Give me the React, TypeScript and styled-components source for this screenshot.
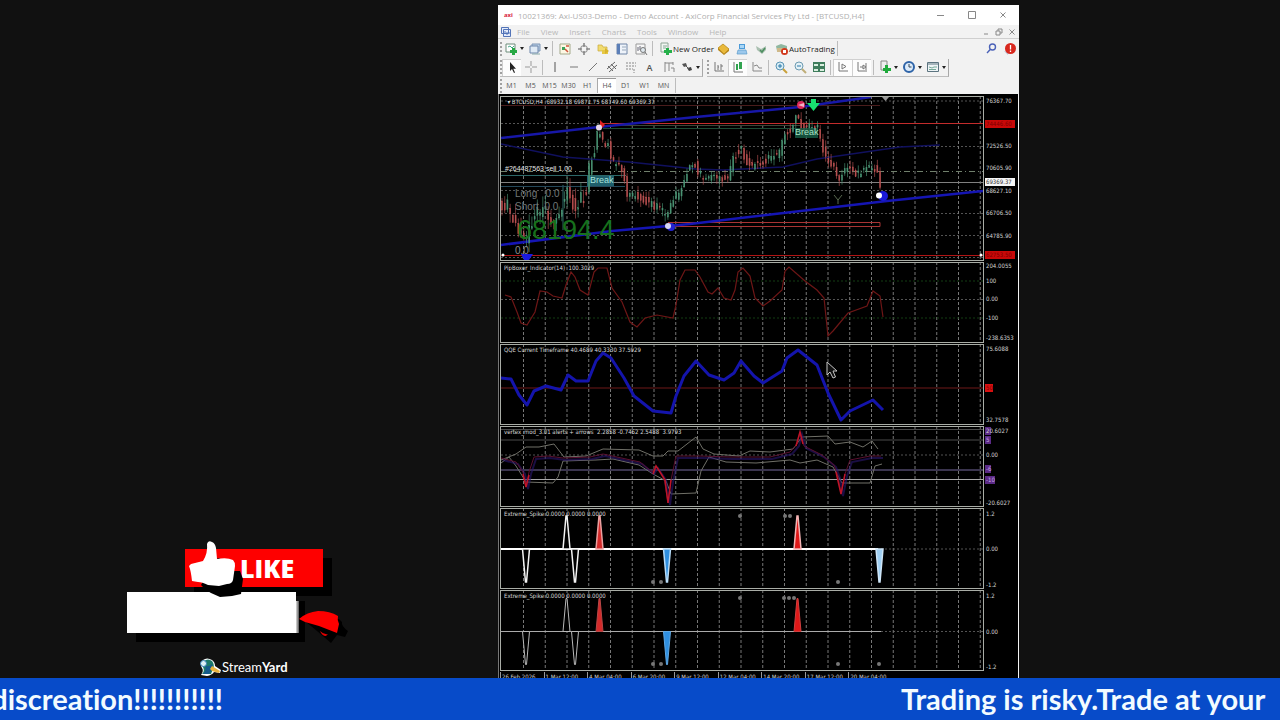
import React from "react";
import styled, { createGlobalStyle, css } from "styled-components";

const GlobalStyle = createGlobalStyle`
  * { box-sizing: border-box; }
  body { margin: 0; background: #111111; font-family: "Open Sans", "Liberation Sans", sans-serif; }
  button { font: inherit; color: inherit; border: 0; padding: 0; background: none; }
`;

/* ---------- page ---------- */
const Page = styled.div`
  display: flex;
  flex-direction: column;
  min-height: 100vh;
  background: #111111;
  overflow: hidden;
`;
const Stage = styled.main`
  flex: 1;
  display: grid;
  grid-template-columns: minmax(0, 498fr) minmax(0, 521fr) minmax(0, 261fr);
`;

/* ---------- stream overlay on the left ---------- */
const Overlay = styled.aside`
  display: flex;
  flex-direction: column;
  justify-content: flex-end;
  align-items: flex-start;
  padding-left: 127px;
`;
const LikeButton = styled.button`
  position: relative;
  width: 138px;
  height: 38px;
  margin-left: 58px;
  padding-left: 55px;
  display: flex;
  align-items: center;
  background: #fe0000;
  box-shadow: 9px 9px 0 #000;
  color: #fff;
  font-size: 25px;
  font-weight: 800;
  line-height: 36px;
`;
const Thumb = styled.svg`
  position: absolute;
  z-index: 1;
  left: 0;
  top: -10px;
  width: 64px;
  height: 60px;
`;
const CardRow = styled.div`
  display: flex;
  align-items: flex-start;
  margin-top: 5px;
`;
const Card = styled.div`
  position: relative;
  width: 169px;
  height: 41px;
  background: #fff;
  box-shadow: 9px 9px 0 #000;
`;
const CardEdge = styled.div`
  width: 3px;
  height: 32px;
  margin-top: 9px;
  position: relative;
  background: linear-gradient(90deg, #ddd, #555);
`;
const Cap = styled.svg`
  position: relative;
  width: 52px;
  height: 40px;
  margin-top: 15px;
`;
const Brand = styled.div`
  display: flex;
  align-items: center;
  margin: 10px 0 1px 72px;
  color: #fff;
  font-family: Lato, sans-serif;
  font-size: 13px;
  line-height: 18px;
`;
const BrandMark = styled.svg`
  width: 23px;
  height: 20px;
`;

/* ---------- terminal window ---------- */
const Terminal = styled.section`
  margin-top: 5px;
  display: flex;
  flex-direction: column;
  background: #f2f2f2;
  min-width: 0;
`;
const TitleBar = styled.header`
  display: flex;
  align-items: center;
  height: 20px;
  padding: 0 12px 0 6px;
  background: #fff;
  color: #b0b0b0;
`;
const AppMark = styled.span`
  width: 14px;
  color: #d8203c;
  font-size: 6px;
  font-weight: 700;
`;
const Title = styled.h1`
  flex: 1;
  margin: 0;
  font-size: 8px;
  font-weight: 400;
  white-space: nowrap;
`;
const WindowButtons = styled.div<{ $gap: number }>`
  display: flex;
  gap: ${(p) => p.$gap}px;
  color: #888;
`;
const GlyphButton = styled.button`
  display: flex;
  width: 8px;
  height: 8px;
`;
const MenuBar = styled.nav`
  display: flex;
  align-items: center;
  height: 14px;
  padding: 0 3px 0 2px;
  border-bottom: 1px solid #cfcfcf;
  color: #b8b8b8;
  font-size: 8px;
`;
const MenuItems = styled.div`
  flex: 1;
  display: flex;
  gap: 11px;
  margin-left: 5px;
`;
const Bar = styled.div<{ $h: number }>`
  display: flex;
  align-items: center;
  height: ${(p) => p.$h}px;
  padding-left: 2px;
`;
const Group = styled.div`
  display: flex;
  align-items: center;
  height: 18px;
  margin-right: 4px;
  border-right: 1px solid #a8a8a8;
  border-bottom: 1px solid #bdbdbd;
`;
const Grip = styled.span`
  width: 2px;
  height: 14px;
  border-left: 2px dotted #a0a0a0;
`;
const Sep = styled.span`
  width: 1px;
  height: 15px;
  margin: 0 2px;
  background: #bcbcbc;
`;
const Tool = styled.button<{ $w?: number; $on?: boolean }>`
  flex: none;
  display: flex;
  align-items: center;
  justify-content: center;
  gap: 2px;
  width: ${(p) => p.$w ?? 19}px;
  height: 17px;
  color: #555;
  ${(p) => p.$on && css`background: #fdfdfd; box-shadow: inset 1px 1px 0 #d0d0d0;`}
`;
const Letter = styled.span`
  font-size: 9px;
  font-weight: 600;
`;
const LabelTool = styled.button`
  display: flex;
  align-items: center;
  height: 17px;
  padding-left: 4px;
  color: #1c1c1c;
  font-size: 8px;
  white-space: nowrap;
`;
const Caret = styled.span`
  border: 2px solid transparent;
  border-top: 3px solid #222;
  border-bottom: 0;
`;
const Spacer = styled.span`
  flex: 1;
`;
const Glyph = styled.svg`
  flex: none;
  width: 14px;
  height: 14px;
`;
const FrameButton = styled.button<{ $on?: boolean }>`
  width: 19px;
  height: 15px;
  color: #555;
  font-size: 7px;
  line-height: 14px;
  ${(p) => p.$on && css`background: #fff; border-top: 1px solid #999; border-left: 1px solid #aaa;`}
`;

/* ---------- charts ---------- */
const Charts = styled.div`
  display: flex;
  flex-direction: column;
  gap: 1px;
  padding: 2px 0 0 1px;
  background: #000;
  border-left: 1px solid #777;
  border-right: 1px solid #f4f4f4;
`;
const Panel = styled.section<{ $h: number }>`
  display: flex;
  height: ${(p) => p.$h}px;
`;
const Plot = styled.div`
  position: relative;
  flex: 1;
  min-width: 0;
  border: 1px solid #a9ada6;
`;
const Drawing = styled.svg`
  display: block;
  width: 100%;
  height: 100%;
`;
const PlotTitle = styled.h2`
  position: absolute;
  left: 3px;
  top: 0;
  margin: 0;
  color: #d8d8d8;
  font-family: "DejaVu Sans Condensed", "DejaVu Sans", sans-serif;
  font-size: 6px;
  font-weight: 400;
  line-height: 9px;
  white-space: pre;
`;
const Note = styled.span<{ $x: number; $y: number; $size: number; $color: string }>`
  position: absolute;
  left: ${(p) => p.$x}px;
  top: ${(p) => p.$y}px;
  color: ${(p) => p.$color};
  font-family: "Liberation Sans", sans-serif;
  font-size: ${(p) => p.$size}px;
  line-height: 1;
  white-space: pre;
`;
const Scale = styled.div`
  position: relative;
  flex: none;
  width: 34px;
  overflow: hidden;
  color: #d4d4d4;
  font-family: "DejaVu Sans Condensed", "DejaVu Sans", sans-serif;
  font-size: 6px;
  line-height: 8px;
`;
const tones = {
  plain: css``,
  red: css`background: #c80808; color: #7c0000; width: 30px;`,
  white: css`background: #f4f4f4; color: #333; width: 30px;`,
  dot: css`background: #d81010; color: #7c0000; width: 8px;`,
  purple: css`background: #5b2a86; color: #c8a8e0; min-width: 6px;`,
};
type Tone = keyof typeof tones;
const Mark = styled.span<{ $y: number; $tone: Tone }>`
  position: absolute;
  left: 1px;
  top: ${(p) => p.$y - 4}px;
  height: 8px;
  padding-left: 1px;
  ${(p) => tones[p.$tone]}
`;
const TimeAxis = styled.div`
  display: flex;
  height: 6px;
  margin-right: 34px;
  overflow: hidden;
  color: #d4d4d4;
  font-family: "DejaVu Sans Condensed", "DejaVu Sans", sans-serif;
  font-size: 6px;
  line-height: 9px;
`;
const TimeLabel = styled.time`
  flex: 0 0 9%;
  padding-left: 1px;
  border-left: 1px solid #999;
  white-space: nowrap;
`;

/* ---------- ticker ---------- */
const Ticker = styled.footer`
  display: grid;
  grid-template-columns: minmax(0, 223fr) minmax(0, 678fr) minmax(0, 379fr);
  align-items: center;
  height: 42px;
  overflow: hidden;
  background: #074bc9;
  color: #f2fbff;
  font-family: Lato, "Open Sans", sans-serif;
  font-size: 29px;
  font-weight: 700;
  font-variant-ligatures: none;
  line-height: 42px;
  white-space: nowrap;
`;
const TickerTail = styled.span`
  justify-self: end;
`;
const TickerHead = styled.span`
  grid-column: 3;
`;

/* ---------- toolbar icons ---------- */
const icons: Record<string, React.ReactNode> = {
  newChart: <><path d="M2 2h9v8H2z" fill="#fff" stroke="#6d8d7a" /><path d="M4 5l2-1 2 2 2-2" stroke="#4a8" fill="none" /><path d="M8 6h3v2h2v3h-2v2H8v-2H6V8h2z" fill="#27a844" /></>,
  profiles: <><path d="M4 2h8v7H4z" fill="#b9cfe6" stroke="#7d95b5" /><path d="M2 4h8v7H2z" fill="#dfeaf5" stroke="#6c86ab" /><path d="M4 12h8" stroke="#8aa" /></>,
  market: <><path d="M2 2h10v10H2z" fill="#fdf8e4" stroke="#a3a98a" /><path d="M4 5h3v3H4z" fill="#3aa45c" /><path d="M7 7l3 3M8 4h3" stroke="#d0543c" strokeWidth="1.5" /></>,
  target: <g stroke="#888" fill="none"><circle cx="7" cy="7" r="3.5" /><path d="M7 1v4M7 9v4M1 7h4M9 7h4" strokeWidth="1.6" /></g>,
  folder: <><path d="M2 3h4l1 2h4v4H2z" fill="#f1dc70" stroke="#c8a93a" strokeWidth=".7" /><path d="M6 8h6v4H6z" fill="#e6c845" /><path d="M9 6l4 3-4 3z" fill="#d8b32a" /></>,
  terminal: <><path d="M2 2h10v10H2z" fill="#eef3fa" stroke="#7187a8" /><path d="M2 2h3v10H2z" fill="#5b7fb8" /><path d="M7 5h4M7 8h4" stroke="#9ab" /></>,
  tester: <><path d="M2 2h9v10H2z" fill="#f7f7f7" stroke="#999" /><path d="M4 9V5M6 8V4M8 7v3" stroke="#667" /><circle cx="9" cy="8" r="2.5" fill="#dfe8ee" stroke="#777" /><path d="M11 10l2 3" stroke="#777" /></>,
  order: <><path d="M2 1h7v9H2z" fill="#f3f6f3" stroke="#8ea596" /><path d="M4 4h4M4 6h3" stroke="#8a9" /><path d="M7 6h3v2h3v3h-3v2H7v-2H5V8h2z" fill="#25b04a" /></>,
  gold: <><path d="M2 6l5-4 6 5-5 5z" fill="#e9b93a" stroke="#b88918" strokeWidth=".8" /><path d="M2 6v2l6 5 5-4V7l-5 5z" fill="#b98718" /></>,
  cloud: <><path d="M4 2h6v5H4z" fill="#4c9ad8" /><path d="M3 8h8l1 4H2z" fill="#9cc8ec" stroke="#5a9ccc" strokeWidth=".7" /><path d="M5 3h4v3H5z" fill="#a9d6f5" /></>,
  signal: <><path d="M2 4l5 3 5-3v4l-4 4-5-4z" fill="#a9bfb0" /><path d="M6 8l2 2 3-4" stroke="#4d8f60" fill="none" strokeWidth="1.5" /></>,
  auto: <><path d="M1 4l5-2 6 2v5H2z" fill="#8fb7a0" /><path d="M2 6h8v4H2z" fill="#cfb98a" /><circle cx="9.500" cy="9.500" r="3.500" fill="#d23a1e" /><path d="M8 8h3v3H8z" fill="#fff" /></>,
  search: <g fill="none" stroke="#4b62b8" strokeWidth="1.400"><circle cx="8.500" cy="5" r="3" /><path d="M6.200 7.500L3 11" /></g>,
  alert: <><path d="M1 9l4 1v3z" fill="#b8c4d8" /><circle cx="7.500" cy="6.500" r="5.500" fill="#d8281e" /><path d="M7.500 3v4.500M7.500 8.500v1.500" stroke="#fff" strokeWidth="1.300" /></>,
  pointer: <path d="M5 2v9l2-2 2 4 1-.6-1.700-3.600H11z" fill="#222" />,
  cross: <path d="M7 1v5M7 8v5M1 7h5M8 7h5" stroke="#999" />,
  vline: <path d="M7 2v10" stroke="#555" />,
  hline: <path d="M3 7h8" stroke="#777" />,
  trend: <path d="M3 11l8-8" stroke="#777" />,
  channel: <path d="M2 9l8-7M4 12l8-7M3 6l5 5M6 4l5 5" stroke="#666" />,
  fibo: <path d="M2 3h10M2 6h10M2 9h7M10 9v4" stroke="#888" strokeDasharray="2 1" />,
  textBox: <path d="M3 3h8M7 3v8M3 2v10M11 2v3M9 8h3v4" stroke="#888" fill="none" />,
  arrows: <><path d="M2 4l4-1 1 3-3 1z" fill="#555" /><path d="M7 8l4-1 1 3-3 1z" fill="#444" /><path d="M5 5l4 4" stroke="#555" /></>,
  bars: <path d="M3 2v9h9M6 5v5M9 4v6M6 7h1M9 6h2" stroke="#777" fill="none" />,
  candles: <><path d="M3 2v10h9" stroke="#777" fill="none" /><path d="M5 4h2v6H5zM8 2h3v7H8z" fill="#31a350" /></>,
  line: <path d="M3 2v9h9M4 6l3-1 2 3 3 0" stroke="#888" fill="none" />,
  zoomIn: <><circle cx="6" cy="6" r="4" fill="#d6ecf6" stroke="#5a94b4" /><path d="M4 6h4M6 4v4" stroke="#2a78a8" /><path d="M9 9l4 4" stroke="#c9a13a" strokeWidth="2" /></>,
  zoomOut: <><circle cx="6" cy="6" r="4" fill="#e4f1f6" stroke="#6c9ab0" /><path d="M4 6h4" stroke="#2a78a8" /><path d="M9 9l4 4" stroke="#bfae78" strokeWidth="2" /></>,
  tile: <><path d="M1 2h12v10H1z" fill="#3f7d5c" /><path d="M2 4h4v2H2zM8 4h4v2H8zM2 9h4v2H2zM8 9h4v2H8z" fill="#d9efdf" /></>,
  shift: <path d="M3 2v9h9M6 4l4 2.500L6 9z" stroke="#777" fill="none" />,
  scroll: <path d="M3 2v9h9M5 7h3M11 3v7M8 5l3 2-3 2z" stroke="#777" fill="none" />,
  indicator: <><path d="M3 1h6v9H3z" fill="#eee" stroke="#888" /><path d="M7 5h3v3h3v3h-3v2H7v-2H5V8h2z" fill="#1faa3c" /></>,
  clock: <><circle cx="7" cy="7" r="5" fill="#dcebfa" stroke="#2e64a8" strokeWidth="2" /><path d="M7 4v3h2.500" stroke="#345" fill="none" /></>,
  template: <><path d="M1.500 2.500h11v9h-11z" fill="#eef4f6" stroke="#5c7480" /><path d="M1 4h12" stroke="#5c7480" /><path d="M3 7l3 1 2-1 3 0M3 9.500h7" stroke="#7a9" fill="none" /></>,
};
const Icon = ({ name }: { name: string }) => (
  <Glyph viewBox="0 0 14 14" aria-hidden="true">{icons[name]}</Glyph>
);
const IconTool = ({ name, menu, on }: { name: string; menu?: boolean; on?: boolean }) => (
  <Tool aria-label={name} $w={menu ? 24 : 19} $on={on}>
    <Icon name={name} />
    {menu && <Caret />}
  </Tool>
);

/* ---------- chart data ---------- */
type Pt = [number, number];
const toPoints = (s: string): Pt[] => s.split(" ").map((p) => p.split(",").map(Number) as Pt);

const price = toPoints("502,207 508,203 513,212 518,226 523,238 526,244 530,225 538,212 545,208 552,218 560,220 565,200 567,185 571,192 576,212 581,197 589,194 591,161 596,151 599,129 603,141 611,147 613,162 621,164 626,177 629,197 639,194 649,202 659,207 668,215 673,202 683,187 689,171 695,161 700,174 708,179 715,172 720,179 730,176 733,161 742,146 747,159 752,166 762,164 772,156 780,157 785,134 793,127 798,112 802,126 820,128 823,147 828,162 835,167 839,182 845,172 853,166 858,176 865,167 873,167 879,172 881,189");
const pip = "505,295 511,297 517,312 521,323 527,325 535,312 540,291 547,292 553,296 562,298 566,285 571,272 575,277 580,290 588,295 594,272 598,268 607,268 612,288 622,302 630,322 637,327 645,318 657,315 673,318 676,305 680,280 685,270 695,270 700,277 708,292 712,294 718,288 724,298 731,300 735,290 738,272 743,268 750,276 755,298 763,306 770,301 782,290 785,271 789,267 805,281 817,290 824,298 828,336 833,331 848,313 867,306 873,291 880,296 883,317";
const qqe = "501,378 511,379 519,395 527,405 534,391 546,386 561,390 568,375 576,381 588,381 596,361 603,353 611,358 624,378 634,396 653,411 671,413 676,396 684,376 696,361 709,375 724,380 734,373 741,361 754,376 763,383 782,371 787,358 798,350 817,365 828,393 841,420 850,411 873,400 883,410";
const bandTop = "501,460 516,454 526,447 539,447 554,444 564,457 586,456 603,449 639,450 653,456 663,456 668,451 678,451 696,437 703,449 714,454 739,456 750,451 770,452 793,449 802,437 828,436 835,444 850,442 863,447 872,441 878,449";
const bandLow = "501,463 509,457 516,466 526,482 553,483 558,477 563,461 596,460 613,459 639,465 653,474 666,481 671,494 696,493 701,471 709,457 726,462 756,463 790,460 800,463 817,460 833,467 842,483 870,483 875,466 882,464";
const vertex = "501,458 516,462 523,472 526,487 529,472 534,457 548,456 563,458 590,457 603,454 640,462 652,472 656,466 664,478 668,503 671,480 676,456 700,456 730,457 770,457 790,452 797,444 800,432 804,446 822,455 834,465 838,476 841,494 845,474 850,460 870,456 881,456";

const yAt = (x: number) => {
  for (let i = 1; i < price.length; i++) {
    const [x0, y0] = price[i - 1];
    const [x1, y1] = price[i];
    if (x <= x1) return y0 + ((y1 - y0) * (x - x0)) / (x1 - x0);
  }
  return price[price.length - 1][1];
};
const noise = (i: number) => {
  const v = Math.sin(i * 127.1) * 43758.5;
  return v - Math.floor(v);
};
const candles = Array.from({ length: 140 }, (_, i) => {
  const x = 502 + i * 2.72;
  const swing = x < 590 ? 14 : 8;
  const open = yAt(x - 1.4) + (noise(i) - 0.5) * swing;
  const close = yAt(x + 1.4) + (noise(i + 400) - 0.5) * swing;
  return {
    x, open, close,
    high: Math.min(open, close) - 1 - noise(i + 50) * swing * 0.8,
    low: Math.max(open, close) + 1 + noise(i + 90) * swing * 0.8,
  };
});

const Grid = ({ top, height, rows = [] }: { top: number; height: number; rows?: number[] }) => (
  <g stroke="#8c8c8c" strokeWidth="1" opacity=".85">
    {Array.from({ length: 22 }, (_, i) => {
      const x = 523.5 + i * 21.75;
      return <line key={x} x1={x} x2={x} y1={top} y2={top + height} strokeDasharray="3 2" />;
    })}
    {rows.map((y) => <line key={y} x1="501" x2="983" y1={y} y2={y} strokeDasharray="2 2" opacity=".7" />)}
  </g>
);

interface ChartProps {
  title: string;
  top: number;
  height: number;
  rows?: number[];
  marks: [string, number, Tone?][];
  children: React.ReactNode;
  notes?: React.ReactNode;
}
/* Drawings share one coordinate space across panels; each panel shows its own slice. */
const Chart = ({ title, top, height, rows, marks, children, notes }: ChartProps) => (
  <Panel $h={height}>
    <Plot>
      <Drawing viewBox={`501 ${top + 1} 482 ${height - 2}`} preserveAspectRatio="none" aria-hidden="true">
        <Grid top={top} height={height} rows={rows} />
        {children}
      </Drawing>
      <PlotTitle>{title}</PlotTitle>
      {notes}
    </Plot>
    <Scale>
      {marks.map(([text, y, tone = "plain"]) => (
        <Mark key={`${text}-${y}`} $y={y - top} $tone={tone}>{text}</Mark>
      ))}
    </Scale>
  </Panel>
);

const Spike = ({ x, zero, tip, fill, stroke }: { x: number; zero: number; tip: number; fill: string; stroke: string }) => (
  <path d={`M${x - 3.5} ${zero}L${x - 0.5} ${tip}h1L${x + 3.5} ${zero}z`} fill={fill} stroke={stroke} />
);
const SpikeChart = ({ top, zero, bold, dots }: { top: number; zero: number; bold?: boolean; dots: Pt[] }) => {
  const up = zero - 33;
  const down = zero + 33;
  const light = bold ? "#f4f4f4" : "#b8b8b8";
  return (
    <Chart title="Extreme_Spike 0.0000 0.0000 0.0000" top={top} height={81} rows={[zero]}
      marks={[["1.2", top + 6], ["0.00", zero], ["-1.2", top + 77]]}>
      <line x1="501" x2={bold ? 878 : 881} y1={zero} y2={zero} stroke={bold ? "#fff" : "#aaa"} strokeWidth={bold ? 2 : 1} />
      <g strokeWidth={bold ? 1.5 : 1}>
        <Spike x={526} zero={zero} tip={down} fill="#000" stroke={light} />
        <Spike x={566.5} zero={zero} tip={up} fill="#000" stroke={light} />
        <Spike x={575} zero={zero} tip={down} fill="#000" stroke={light} />
        <Spike x={599.5} zero={zero} tip={up} fill="#d42a2a" stroke={bold ? "#eaa0a0" : "#b84848"} />
        <Spike x={667} zero={zero} tip={down} fill="#2f8fe0" stroke={bold ? "#b8dcf8" : "#5fa8e4"} />
        <Spike x={797.5} zero={zero} tip={up} fill="#e01818" stroke={bold ? "#f4b4b4" : "#d04040"} />
        {bold && <Spike x={879.5} zero={zero} tip={down} fill="#9fd0f4" stroke="#cfe6f8" />}
      </g>
      {dots.map(([x, y]) => <circle key={`${x}-${y}`} cx={x} cy={y} r="2" fill="#777" />)}
    </Chart>
  );
};

const menus = ["File", "View", "Insert", "Charts", "Tools", "Window", "Help"];
const frames = ["M1", "M5", "M15", "M30", "H1", "H4", "D1", "W1", "MN"];
const times = ["26 Feb 2026", "1 Mar 12:00", "4 Mar 04:00", "6 Mar 20:00", "9 Mar 12:00", "12 Mar 04:00", "14 Mar 20:00", "17 Mar 12:00", "20 Mar 04:00"];

const Controls = ({ gap, small }: { gap: number; small?: boolean }) => (
  <WindowButtons $gap={gap}>
    <GlyphButton aria-label="Minimize"><svg viewBox="0 0 8 8" width="8" height="8"><path d={small ? "M2 6h4" : "M0 4.500h7"} stroke="currentColor" /></svg></GlyphButton>
    <GlyphButton aria-label="Restore"><svg viewBox="0 0 8 8" width="8" height="8"><path d={small ? "M1 3h4v4H1zM3 3V1h4v4H5" : "M.5 .5h7v7h-7z"} fill="none" stroke="currentColor" /></svg></GlyphButton>
    <GlyphButton aria-label="Close"><svg viewBox="0 0 8 8" width="8" height="8"><path d="M1.500 1.500l5 5M6.500 1.500l-5 5" stroke="currentColor" /></svg></GlyphButton>
  </WindowButtons>
);

export default function App() {
  return (
    <Page>
      <GlobalStyle />
      <Stage>
        <Overlay>
          <LikeButton>
            LIKE
            <Thumb viewBox="0 0 64 60" aria-hidden="true">
              <path d="M31 22q2-6 6 0l2 10h16l3 8-2 15-9 2-12 1-9-4-5-3-5-5z" fill="#000" />
              <path d="M22 5q1-4 5-2 3 1 4 6l1 11q10-2 16 1 2 2 2 6l-2 14q-1 4-6 4l-8 2-11-1q-6-3-10-3l-6-1q-1-10-3-15l2-2 12-3q5-8 4-17z" fill="#fff" />
            </Thumb>
          </LikeButton>
          <CardRow>
            <Card />
            <CardEdge />
            <Cap viewBox="0 0 52 40" aria-hidden="true">
              <path d="M6 14L40 12l3 3q-1 4 6 9l-3 6-8-2-6 8-14-12z" fill="#000" />
              <path d="M0 12q8-7 19-8 12 0 20 5-1 4 1 8l-2 9L20 19 6 15z" fill="#fe0000" />
              <path d="M21 24q4 4 8 3l-2 2q-4 0-6-5z" fill="#e00000" />
            </Cap>
          </CardRow>
          <Brand>
            <BrandMark viewBox="0 0 23 20" aria-hidden="true">
              <path d="M2 18q3-4 1-7-3-5 1-8 4-3 9 0 3 2 3 6l6 4-1 3-6-1q-2 3-7 4z" fill="#fff" />
              <path d="M3 17q3-3 1-7-2-4 1-6 4-3 8 0 3 4 1 8l-2 5z" fill="#1d7a68" />
              <path d="M6 9q4 1 7-2v5l-3 5H4q4-4 2-8z" fill="#155a8c" />
              <circle cx="4.500" cy="6.500" r="3" fill="#dff0f6" stroke="#357fb5" />
              <path d="M13 9l8 5-1 2-7-2-2-2z" fill="#e9b23c" />
            </BrandMark>
            <span>Stream<b>Yard</b></span>
          </Brand>
        </Overlay>

        <Terminal>
          <TitleBar>
            <AppMark>axi</AppMark>
            <Title>10021369: Axi-US03-Demo - Demo Account - AxiCorp Financial Services Pty Ltd - [BTCUSD,H4]</Title>
            <Controls gap={23} />
          </TitleBar>
          <MenuBar>
            <svg width="12" height="12" viewBox="0 0 12 12" aria-hidden="true"><path d="M1.500 1.500h7v6h-7zM3.500 3.500h7v7h-7z" fill="#e4ecfa" stroke="#5374b8" /><path d="M5 8V5M7 9V6M9 8V6" stroke="#5374b8" /></svg>
            <MenuItems>{menus.map((m) => <button key={m}>{m}</button>)}</MenuItems>
            <Controls gap={5} small />
          </MenuBar>
          <Bar $h={19}>
            <Grip />
            <IconTool name="newChart" menu />
            <IconTool name="profiles" menu />
            <Sep />
            {["market", "target", "folder", "terminal", "tester"].map((n) => <IconTool key={n} name={n} />)}
            <Sep />
            <LabelTool><Icon name="order" />New Order</LabelTool>
            {["gold", "cloud", "signal"].map((n) => <IconTool key={n} name={n} />)}
            <LabelTool><Icon name="auto" />AutoTrading</LabelTool>
            <Sep />
            <Spacer />
            <IconTool name="search" />
            <IconTool name="alert" />
          </Bar>
          <Bar $h={19}>
            <Group>
              <Grip />
              <IconTool name="pointer" on />
              <IconTool name="cross" />
              <Sep />
              {["vline", "hline", "trend", "channel", "fibo"].map((n) => <IconTool key={n} name={n} />)}
              <Tool aria-label="Text"><Letter>A</Letter></Tool>
              <IconTool name="textBox" />
              <IconTool name="arrows" menu />
            </Group>
            <Group>
              <Grip />
              <IconTool name="bars" />
              <IconTool name="candles" on />
              <IconTool name="line" />
              <Sep />
              {["zoomIn", "zoomOut", "tile"].map((n) => <IconTool key={n} name={n} />)}
              <Sep />
              <IconTool name="shift" on />
              <IconTool name="scroll" on />
              <Sep />
              {["indicator", "clock", "template"].map((n) => <IconTool key={n} name={n} menu />)}
            </Group>
          </Bar>
          <Bar $h={17}>
            <Grip />
            {frames.map((f) => <FrameButton key={f} $on={f === "H4"}>{f}</FrameButton>)}
            <Sep />
          </Bar>

          <Charts>
            <Chart
              title={"  ▾ BTCUSD,H4  68932.18 69871.75 68749.60 69369.37"}
              top={96}
              height={165}
              rows={[101, 146.5, 190.5, 213.5, 235.5, 257.5]}
              marks={[
                ["76367.70", 101], ["74446.60", 124, "red"], ["72526.50", 146], ["70605.90", 168],
                ["68627.10", 191], ["69369.37", 182, "white"], ["66706.50", 213], ["64785.90", 236], ["62753.50", 255, "red"],
              ]}
              notes={
                <>
                  <Note $x={4} $y={68} $size={7} $color="#e4e4e4">#264487563 sell 1.00</Note>
                  <Note $x={14} $y={92} $size={10} $color="#707878">Long   0.0</Note>
                  <Note $x={14} $y={105} $size={10} $color="#707878">Short  0.0</Note>
                  <Note $x={16} $y={120} $size={27} $color="#17701c">68194.4</Note>
                  <Note $x={14} $y={149} $size={10} $color="#8c8c8c">0.0</Note>
                  <Note $x={89} $y={79} $size={9} $color="#a8e4dc">Break</Note>
                  <Note $x={294} $y={31} $size={9} $color="#a8e4c4">Break</Note>
                </>
              }
            >
              <g fill="none">
                <path d="M501 144L563 157 629 162 696 169 723 170 783 167 817 159 900 147 940 145" stroke="#10105e" strokeWidth="1.500" />
                <path d="M501 123.500H603" stroke="#555" strokeDasharray="2 2" />
                <path d="M603 123.500H983" stroke="#c42c2c" />
                <path d="M610 125.500H800" stroke="#3c4636" />
                <path d="M603 128.500H795" stroke="#1c4a34" />
                <path d="M501 105.500H880" stroke="#4a1c1c" />
                <path d="M501 175.500H626M501 182.500H560M563 185V230" stroke="#2c6868" />
                <path d="M501 182.500H983" stroke="#808080" />
                <path d="M501 186.500H625" stroke="#24485a" />
                <path d="M501 171.500H983" stroke="#70806c" strokeDasharray="6 3 1 3" />
                <path d="M501 255.500H983" stroke="#b01414" />
                <path d="M668 222.500H880V226.500H668" stroke="#a83434" />
                <path d="M501 138L599 127 696 117 800 107 871 97" stroke="#1717a8" strokeWidth="2.500" />
                <path d="M501 245L612 231 668 226 690 224 887 201 983 191" stroke="#1515b4" strokeWidth="2.500" />
              </g>
              <rect x="587" y="176" width="27" height="10" fill="#1f5f6c" />
              {candles.map((c) => {
                const color = c.close < c.open ? "#4a9474" : "#b85050";
                return (
                  <g key={c.x} stroke={color} fill={color}>
                    <line x1={c.x} x2={c.x} y1={c.high} y2={c.low} strokeWidth=".8" opacity=".8" />
                    <rect x={c.x - 0.6} y={Math.min(c.open, c.close)} width="1.200" height={Math.abs(c.open - c.close) + 1} strokeWidth=".3" />
                  </g>
                );
              })}
              <rect x="795" y="128" width="23" height="10" fill="#186048" opacity=".8" />
              <path d="M600 120l5 5-5 5z" fill="#e02020" />
              <circle cx="599" cy="127.500" r="3" fill="#e8d8e8" />
              <circle cx="801" cy="105" r="4" fill="#dc2858" />
              <path d="M798 105l6-2v4z" fill="#f4b4c8" />
              <path d="M811 99h5v4h4l-6.500 8-6.500-8h4z" fill="#18e070" />
              <circle cx="671" cy="227" r="4" fill="#2424d0" />
              <circle cx="668" cy="226" r="3" fill="#d8d8f4" />
              <circle cx="883" cy="196" r="5" fill="#1a1ad8" />
              <circle cx="879" cy="195.500" r="3" fill="#fff" />
              <path d="M521 254h12l-4 6h-5z" fill="#1a1ae0" />
              <path d="M834 195l4 5 4-5M838 200v4" stroke="#5a6a50" fill="none" />
              <path d="M882 97h7l-3.500 4z" fill="#999" />
              <circle cx="503" cy="255" r="1.500" fill="#fff" />
              <circle cx="981" cy="255" r="1.500" fill="#fff" />
            </Chart>

            <Chart title="PipBoxer_Indicator(14)  100.3029" top={262} height={81} rows={[299.5]}
              marks={[["204.0055", 266], ["100", 281], ["0.00", 299], ["-100", 318], ["-238.6353", 338]]}>
              <path d="M501 281H983M501 318H983" stroke="#123c12" strokeDasharray="2 2" fill="none" />
              <polyline points={pip} fill="none" stroke="#6e1616" strokeWidth="1.200" />
            </Chart>

            <Chart title="QQE Current Timeframe 40.4689 40.3330 37.5929" top={344} height={81}
              marks={[["75.6088", 349], ["50", 388, "dot"], ["32.7578", 420]]}>
              <path d="M501 388H983" stroke="#6e1818" />
              <polyline points={qqe} fill="none" stroke="#1414ac" strokeWidth="3" strokeLinejoin="round" />
              <path d="M827 362v13l3-3 3 6 2.500-1-2.500-6h4z" fill="#111" stroke="#c4c4c4" />
            </Chart>

            <Chart title="vertex_mod_3.01 alerts + arrows  2.2858 -0.7462 2.5488  3.9793" top={426} height={81}
              rows={[455]}
              marks={[["", 431, "purple"], ["20.6027", 431], ["5", 440, "purple"], ["0.00", 455], ["-6", 469, "purple"], ["-10", 480, "purple"], ["-20.6027", 503]]}>
              <g fill="none">
                <path d="M501 429.500H983M501 440H983" stroke="#4a4a4a" />
                <path d="M501 470H983" stroke="#74689c" />
                <path d="M501 479.500H983" stroke="#a8a8a8" />
                <polyline points={bandTop} stroke="#707068" />
                <polyline points={bandLow} stroke="#707068" />
                <polyline points={vertex} stroke="#2c1870" strokeWidth="2" transform="translate(2 2)" opacity=".6" />
                <polyline points={vertex} stroke="#5a1030" />
                <path d="M523 474l3 13 3-12M653 474l3-8 4 6 5 8 3 23 3-23M796 446l4-14 3 12M836 472l5 22 4-20" stroke="#c01428" strokeWidth="1.500" />
              </g>
            </Chart>

            <SpikeChart top={508} zero={549} bold dots={[[740, 516], [785, 516], [790, 516], [653, 582], [661, 582], [838, 582]]} />
            <SpikeChart top={590} zero={631.5} dots={[[740, 598], [784, 598], [789, 598], [794, 598], [653, 664], [661, 664], [838, 664], [879, 664]]} />
            <TimeAxis>{times.map((t) => <TimeLabel key={t}>{t}</TimeLabel>)}</TimeAxis>
          </Charts>
        </Terminal>
      </Stage>
      <Ticker>
        <TickerTail>discreation!!!!!!!!!!!</TickerTail>
        <TickerHead>Trading is risky.Trade at your</TickerHead>
      </Ticker>
    </Page>
  );
}
